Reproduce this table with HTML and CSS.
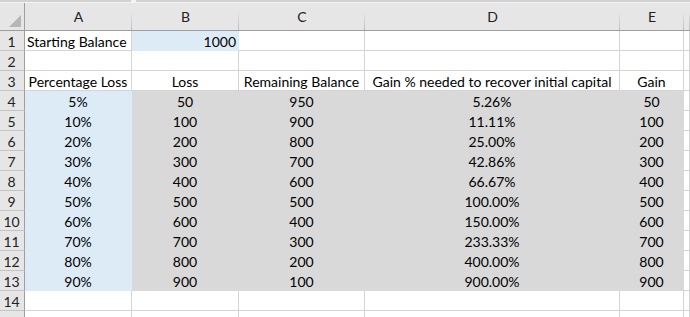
FILE: index.html
```html
<!DOCTYPE html>
<html lang="en">
<head>
<meta charset="utf-8">
<title>Recovery table</title>
<link rel="stylesheet" href="styles.css">
</head>
<body>
<div class="app">
  <div class="ribbon-edge"><span class="seg seg-a"></span><span class="seg seg-b"></span></div>
  <div class="sheet">
    <div class="corner"><svg width="12" height="12" viewBox="0 0 12 12"><polygon points="12,0 12,12 0,12" fill="#b6b6b6"/></svg></div>
    <div class="ch">A</div><div class="ch">B</div><div class="ch">C</div><div class="ch">D</div><div class="ch">E</div><div class="ch last"></div>

    <div class="rh">1</div><div class="c left">Starting Balance</div><div class="c right blue">1000</div><div class="c"></div><div class="c"></div><div class="c"></div><div class="c"></div>
    <div class="rh">2</div><div class="c"></div><div class="c"></div><div class="c"></div><div class="c"></div><div class="c"></div><div class="c"></div>
    <div class="rh">3</div><div class="c">Percentage Loss</div><div class="c">Loss</div><div class="c">Remaining Balance</div><div class="c">Gain % needed to recover initial capital</div><div class="c">Gain</div><div class="c"></div>

    <div class="rh">4</div><div class="c blue">5%</div><div class="c grey">50</div><div class="c grey">950</div><div class="c grey">5.26%</div><div class="c grey">50</div><div class="c"></div>
    <div class="rh">5</div><div class="c blue">10%</div><div class="c grey">100</div><div class="c grey">900</div><div class="c grey">11.11%</div><div class="c grey">100</div><div class="c"></div>
    <div class="rh">6</div><div class="c blue">20%</div><div class="c grey">200</div><div class="c grey">800</div><div class="c grey">25.00%</div><div class="c grey">200</div><div class="c"></div>
    <div class="rh">7</div><div class="c blue">30%</div><div class="c grey">300</div><div class="c grey">700</div><div class="c grey">42.86%</div><div class="c grey">300</div><div class="c"></div>
    <div class="rh">8</div><div class="c blue">40%</div><div class="c grey">400</div><div class="c grey">600</div><div class="c grey">66.67%</div><div class="c grey">400</div><div class="c"></div>
    <div class="rh">9</div><div class="c blue">50%</div><div class="c grey">500</div><div class="c grey">500</div><div class="c grey">100.00%</div><div class="c grey">500</div><div class="c"></div>
    <div class="rh">10</div><div class="c blue">60%</div><div class="c grey">600</div><div class="c grey">400</div><div class="c grey">150.00%</div><div class="c grey">600</div><div class="c"></div>
    <div class="rh">11</div><div class="c blue">70%</div><div class="c grey">700</div><div class="c grey">300</div><div class="c grey">233.33%</div><div class="c grey">700</div><div class="c"></div>
    <div class="rh">12</div><div class="c blue">80%</div><div class="c grey">800</div><div class="c grey">200</div><div class="c grey">400.00%</div><div class="c grey">800</div><div class="c"></div>
    <div class="rh">13</div><div class="c blue">90%</div><div class="c grey">900</div><div class="c grey">100</div><div class="c grey">900.00%</div><div class="c grey">900</div><div class="c"></div>
    <div class="rh">14</div><div class="c"></div><div class="c"></div><div class="c"></div><div class="c"></div><div class="c"></div><div class="c"></div>
    <div class="rh"></div><div class="c"></div><div class="c"></div><div class="c"></div><div class="c"></div><div class="c"></div><div class="c"></div>
  </div>
</div>
</body>
</html>
```
FILE: styles.css
```css
html, body {
  margin: 0;
  padding: 0;
  background: #ffffff;
}

.app {
  width: 690px;
  height: 317px;
  overflow: hidden;
  font-family: "Lato", "Liberation Sans", sans-serif;
  font-size: 14px;
  color: #000000;
}

/* thin strip left over from the formula bar */
.ribbon-edge {
  display: flex;
  height: 3px;
  background: #f3f3f3;
}
.ribbon-edge .seg {
  height: 2px;
  background: #d2d2d2;
}
.seg-a { width: 131px; }
.seg-b { margin-left: 5px; flex: 1; }

.sheet {
  display: grid;
  grid-template-columns: 25px 107px 107px 126px 255px 64px 1fr;
  grid-template-rows: 28px;
  grid-auto-rows: 20px;
}

.sheet > div {
  box-sizing: border-box;
  overflow: hidden;
  white-space: nowrap;
}

.corner {
  background: #e6e6e6;
  border-right: 1px solid #9e9e9e;
  border-bottom: 1px solid #9e9e9e;
  display: flex;
  align-items: flex-end;
  justify-content: flex-end;
  padding: 0 3px 3px 0;
}
.corner svg { display: block; }

.ch {
  background:
    linear-gradient(#e6e6e6, #bcbcbc) right bottom / 1px 19px no-repeat,
    #e6e6e6;
  border-bottom: 1px solid #9e9e9e;
  color: #222222;
  text-align: center;
  line-height: 24px;
  padding-top: 2px;
}

.rh {
  background: #e6e6e6;
  border-right: 1px solid #9e9e9e;
  border-bottom: 1px solid #c4c4c4;
  color: #222222;
  text-align: center;
  line-height: 21px;
  padding-right: 1px;
}

.c {
  border-right: 1px solid #d4d4d4;
  border-bottom: 1px solid #d4d4d4;
  text-align: center;
  line-height: 21px;
  padding: 0 2px;
}
.c.left { text-align: left; }
.c.right { text-align: right; }

.c.blue {
  background: #ddebf7;
  border-color: #ddebf7;
}
.c.grey {
  background: #d9d9d9;
  border-color: #d9d9d9;
}
```
